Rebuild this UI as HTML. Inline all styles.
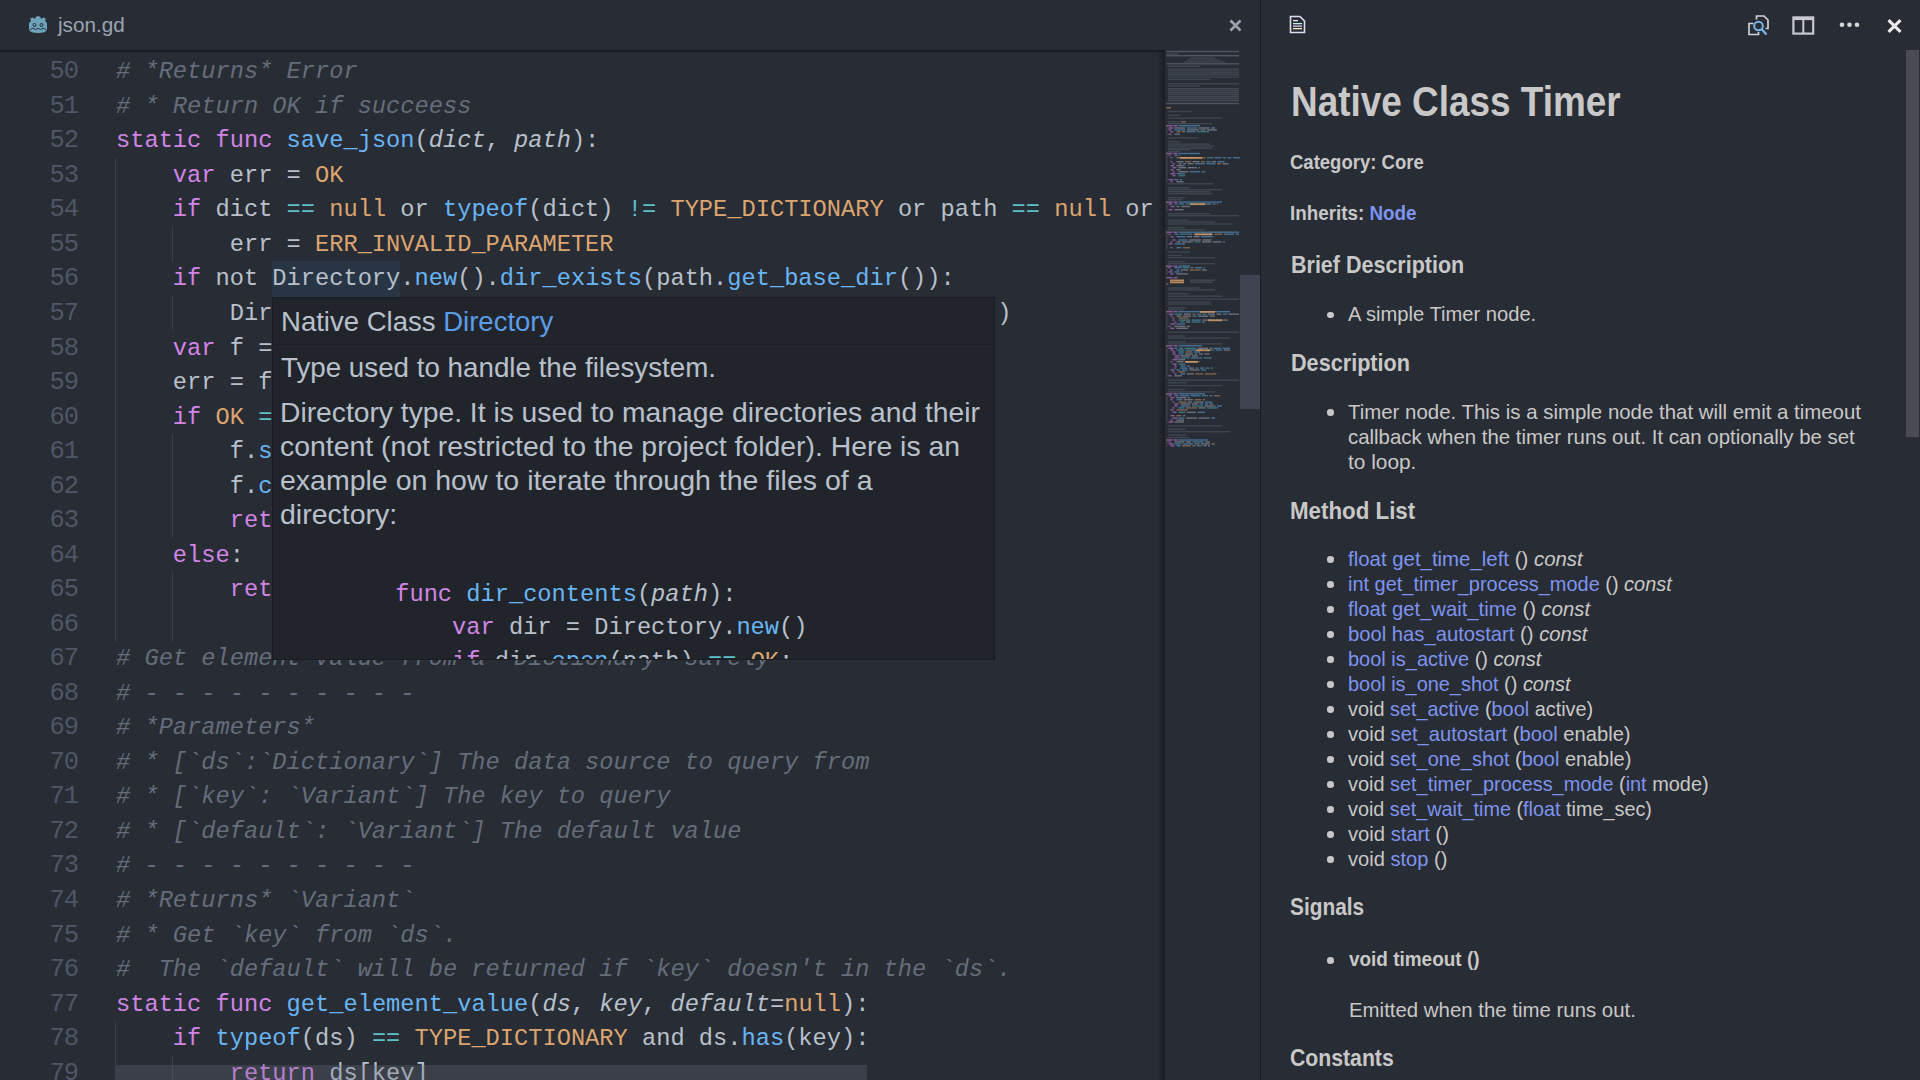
<!DOCTYPE html>
<html><head><meta charset="utf-8">
<style>
*{margin:0;padding:0;box-sizing:border-box}
html,body{width:1920px;height:1080px;overflow:hidden;background:#282c34}
body{position:relative;font-family:"Liberation Sans",sans-serif}
.abs{position:absolute}
#left{position:absolute;left:0;top:0;width:1260px;height:1080px;background:#282c34;overflow:hidden}
#tabbar{position:absolute;left:0;top:0;width:1260px;height:50px;background:#282c34}
#tabshadow{position:absolute;left:0;top:50px;width:1165px;height:3px;background:linear-gradient(#16181d,#1e2127 50%,#262a31)}
#code{position:absolute;left:0;top:55.3px;width:1166px;font-family:"Liberation Mono",monospace;font-size:23.7px;line-height:34.53px;white-space:pre;color:#b9c0cb}
.ln{position:absolute;left:0;width:78px;text-align:right;color:#4f5666;font-size:25.5px;letter-spacing:-1.08px}
.cl{position:absolute;left:116px}
.k{color:#d085e5}.f{color:#68b5f5}.c{color:#dca570}.o{color:#5cbfca}.cm{color:#656c7a;font-style:italic}.i{font-style:italic}
.guide{position:absolute;width:1px;background:#3b4048}
#minimap{position:absolute;left:1165px;top:50px;width:75px;height:1030px;background:#282c34}
#mmshadow{position:absolute;left:1157px;top:50px;width:8px;height:1030px;background:linear-gradient(to right,rgba(10,12,16,0),rgba(10,12,16,0.45))}
#vscroll{position:absolute;left:1240px;top:275px;width:20px;height:134px;background:#3e4451}
#divider{position:absolute;left:1260px;top:0;width:1px;height:1080px;background:#181b21}
#hscroll{position:absolute;left:116px;top:1065.3px;width:751px;height:15px;background:rgba(107,114,128,0.28)}
.pl{white-space:pre;transform-origin:0 0}
.rl{white-space:pre;transform-origin:0 0;color:#c8c8c8}
.bl{width:6.6px;height:6.6px;border-radius:50%;background:#c8c8c8}
#right{position:absolute;left:1261px;top:0;width:659px;height:1080px;background:#282c34;overflow:hidden;color:#cccccc}
</style></head><body>
<div id="left">
  <div id="tabbar"></div>
  <div id="tabshadow"></div>
  <div class="abs" style="left:272px;top:260.6px;width:128px;height:36.4px;background:#283545"></div>
<div class="guide" style="left:115px;top:158.03px;height:34.63px"></div><div class="guide" style="left:115px;top:192.56px;height:34.63px"></div><div class="guide" style="left:115px;top:227.09px;height:34.63px"></div><div class="guide" style="left:172px;top:227.09px;height:34.63px"></div><div class="guide" style="left:115px;top:261.62px;height:34.63px"></div><div class="guide" style="left:115px;top:296.15px;height:34.63px"></div><div class="guide" style="left:172px;top:296.15px;height:34.63px"></div><div class="guide" style="left:115px;top:330.68px;height:34.63px"></div><div class="guide" style="left:115px;top:365.21px;height:34.63px"></div><div class="guide" style="left:115px;top:399.74px;height:34.63px"></div><div class="guide" style="left:115px;top:434.27px;height:34.63px"></div><div class="guide" style="left:172px;top:434.27px;height:34.63px"></div><div class="guide" style="left:115px;top:468.80px;height:34.63px"></div><div class="guide" style="left:172px;top:468.80px;height:34.63px"></div><div class="guide" style="left:115px;top:503.33px;height:34.63px"></div><div class="guide" style="left:172px;top:503.33px;height:34.63px"></div><div class="guide" style="left:115px;top:537.86px;height:34.63px"></div><div class="guide" style="left:115px;top:572.39px;height:34.63px"></div><div class="guide" style="left:172px;top:572.39px;height:34.63px"></div><div class="guide" style="left:115px;top:606.92px;height:34.63px"></div><div class="guide" style="left:172px;top:606.92px;height:34.63px"></div><div class="guide" style="left:115px;top:1021.28px;height:34.63px"></div><div class="guide" style="left:115px;top:1055.81px;height:34.63px"></div><div class="guide" style="left:172px;top:1055.81px;height:34.63px"></div>
  <div id="code"><div class="ln" style="top:0.00px">50</div><div class="cl" style="top:0.00px"><span class="cm"># *Returns* Error</span></div>
<div class="ln" style="top:34.53px">51</div><div class="cl" style="top:34.53px"><span class="cm"># * Return OK if succeess</span></div>
<div class="ln" style="top:69.06px">52</div><div class="cl" style="top:69.06px"><span class="k">static</span> <span class="k">func</span> <span class="f">save_json</span>(<span class="i">dict</span>, <span class="i">path</span>):</div>
<div class="ln" style="top:103.59px">53</div><div class="cl" style="top:103.59px">    <span class="k">var</span> err = <span class="c">OK</span></div>
<div class="ln" style="top:138.12px">54</div><div class="cl" style="top:138.12px">    <span class="k">if</span> dict <span class="o">==</span> <span class="c">null</span> or <span class="f">typeof</span>(dict) <span class="o">!=</span> <span class="c">TYPE_DICTIONARY</span> or path <span class="o">==</span> <span class="c">null</span> or</div>
<div class="ln" style="top:172.65px">55</div><div class="cl" style="top:172.65px">        err = <span class="c">ERR_INVALID_PARAMETER</span></div>
<div class="ln" style="top:207.18px">56</div><div class="cl" style="top:207.18px">    <span class="k">if</span> not Directory.<span class="f">new</span>().<span class="f">dir_exists</span>(path.<span class="f">get_base_dir</span>()):</div>
<div class="ln" style="top:241.71px">57</div><div class="cl" style="top:241.71px">        Directory.<span class="f">new</span>().<span class="f">make_dir_recursive</span>(path.<span class="f">get_base_dir</span>())</div>
<div class="ln" style="top:276.24px">58</div><div class="cl" style="top:276.24px">    <span class="k">var</span> f = File.<span class="f">new</span>()</div>
<div class="ln" style="top:310.77px">59</div><div class="cl" style="top:310.77px">    err = f.<span class="f">open</span>(path, File.WRITE)</div>
<div class="ln" style="top:345.30px">60</div><div class="cl" style="top:345.30px">    <span class="k">if</span> <span class="c">OK</span> <span class="o">==</span> err:</div>
<div class="ln" style="top:379.83px">61</div><div class="cl" style="top:379.83px">        f.<span class="f">store_string</span>(<span class="f">to_json</span>(dict))</div>
<div class="ln" style="top:414.36px">62</div><div class="cl" style="top:414.36px">        f.<span class="f">close</span>()</div>
<div class="ln" style="top:448.89px">63</div><div class="cl" style="top:448.89px">        <span class="k">return</span> err</div>
<div class="ln" style="top:483.42px">64</div><div class="cl" style="top:483.42px">    <span class="k">else</span>:</div>
<div class="ln" style="top:517.95px">65</div><div class="cl" style="top:517.95px">        <span class="k">return</span> err</div>
<div class="ln" style="top:552.48px">66</div><div class="cl" style="top:552.48px"></div>
<div class="ln" style="top:587.01px">67</div><div class="cl" style="top:587.01px"><span class="cm"># Get element value from a `Dictionary` safely</span></div>
<div class="ln" style="top:621.54px">68</div><div class="cl" style="top:621.54px"><span class="cm"># - - - - - - - - - -</span></div>
<div class="ln" style="top:656.07px">69</div><div class="cl" style="top:656.07px"><span class="cm"># *Parameters*</span></div>
<div class="ln" style="top:690.60px">70</div><div class="cl" style="top:690.60px"><span class="cm"># * [`ds`:`Dictionary`] The data source to query from</span></div>
<div class="ln" style="top:725.13px">71</div><div class="cl" style="top:725.13px"><span class="cm"># * [`key`: `Variant`] The key to query</span></div>
<div class="ln" style="top:759.66px">72</div><div class="cl" style="top:759.66px"><span class="cm"># * [`default`: `Variant`] The default value</span></div>
<div class="ln" style="top:794.19px">73</div><div class="cl" style="top:794.19px"><span class="cm"># - - - - - - - - - -</span></div>
<div class="ln" style="top:828.72px">74</div><div class="cl" style="top:828.72px"><span class="cm"># *Returns* `Variant`</span></div>
<div class="ln" style="top:863.25px">75</div><div class="cl" style="top:863.25px"><span class="cm"># * Get `key` from `ds`.</span></div>
<div class="ln" style="top:897.78px">76</div><div class="cl" style="top:897.78px"><span class="cm">#  The `default` will be returned if `key` doesn't in the `ds`.</span></div>
<div class="ln" style="top:932.31px">77</div><div class="cl" style="top:932.31px"><span class="k">static</span> <span class="k">func</span> <span class="f">get_element_value</span>(<span class="i">ds</span>, <span class="i">key</span>, <span class="i">default</span>=<span class="c">null</span>):</div>
<div class="ln" style="top:966.84px">78</div><div class="cl" style="top:966.84px">    <span class="k">if</span> <span class="f">typeof</span>(ds) <span class="o">==</span> <span class="c">TYPE_DICTIONARY</span> and ds.<span class="f">has</span>(key):</div>
<div class="ln" style="top:1001.37px">79</div><div class="cl" style="top:1001.37px">        <span class="k">return</span> ds[key]</div>
</div>
  <div id="popup" class="abs" style="left:271.5px;top:296.5px;width:723.3px;height:363.5px;background:#21252b;border:1px solid #1a1c21;overflow:hidden;color:#b9c0cb">
 <div class="abs" style="left:0;top:0;width:722px;height:47px;border-bottom:1px solid #1b1e23"></div>
 <div class="abs pl" id="p0" style="left:8.0px;top:10.2px;font-size:27.3px;line-height:27.3px;transform:scaleX(1.0085)">Native Class <span style="color:#5c9ce6">Directory</span></div>
 <div class="abs pl" id="p1" style="left:8.5px;top:56.6px;font-size:27.8px;line-height:27.8px;transform:scaleX(0.9983)">Type used to handle the filesystem.</div>
 <div class="abs pl" id="p2" style="left:7.6px;top:101.6px;font-size:27.8px;line-height:27.8px;transform:scaleX(1.0157)">Directory type. It is used to manage directories and their</div>
 <div class="abs pl" id="p3" style="left:7.6px;top:135.5px;font-size:27.8px;line-height:27.8px;transform:scaleX(1.0213)">content (not restricted to the project folder). Here is an</div>
 <div class="abs pl" id="p4" style="left:7.6px;top:169.3px;font-size:27.8px;line-height:27.8px;transform:scaleX(1.0252)">example on how to iterate through the files of a</div>
 <div class="abs pl" id="p5" style="left:7.6px;top:203.1px;font-size:27.8px;line-height:27.8px;transform:scaleX(1.0253)">directory:</div>
 <div class="abs" style="left:9px;top:280px;font-family:'Liberation Mono',monospace;font-size:23.7px;line-height:33.8px;white-space:pre">        <span class="k">func</span> <span class="f">dir_contents</span>(<span class="i">path</span>):
            <span class="k">var</span> dir = Directory.<span class="f">new</span>()
            <span class="k">if</span> dir.<span class="f">open</span>(path) <span class="o">==</span> <span class="c">OK</span>:</div>
</div>

  <svg class="abs" style="left:28px;top:15px" width="20" height="19" viewBox="0 0 20 19">
<path d="M3 6 L2.2 3.5 L5 2.6 L6.5 4 Q8 1 10 1 Q12 1 13.5 4 L15 2.6 L17.8 3.5 L17 6 L19 8 L19 14 Q19 18 10 18 Q1 18 1 14 L1 8 Z" fill="#6fa3bb"/>
<circle cx="6.5" cy="10" r="2" fill="#2a3a46"/><circle cx="13.5" cy="10" r="2" fill="#2a3a46"/>
<circle cx="6.5" cy="10" r="0.9" fill="#6fa3bb"/><circle cx="13.5" cy="10" r="0.9" fill="#6fa3bb"/>
<path d="M2 14.5 L5 13.3 L7.5 14.5 L10 13.3 L12.5 14.5 L15 13.3 L18 14.5" stroke="#2a3a46" stroke-width="1" fill="none"/>
</svg>
<div class="abs" style="left:58px;top:10px;font-size:20.7px;line-height:30px;color:#9da5b4">json.gd</div>
<svg class="abs" style="left:1229px;top:19px" width="13" height="13" viewBox="0 0 13 13"><path d="M1.5 1.5 L11.5 11.5 M11.5 1.5 L1.5 11.5" stroke="#9ba2b0" stroke-width="2.6"/></svg>

  <div id="mmshadow"></div>
  <div id="minimap"><svg class="abs" style="left:0;top:0" width="75" height="410"><rect x="1.5" y="0.8" width="72.5" height="1.4" fill="#5c6370" opacity="0.75"/><rect x="1.5" y="3.2" width="11.5" height="1.4" fill="#5c6370" opacity="0.55"/><rect x="1.5" y="5.0" width="72.5" height="1.4" fill="#5c6370" opacity="0.75"/><rect x="25.0" y="7.4" width="25.0" height="1.4" fill="#5c6370" opacity="0.45"/><rect x="22.0" y="9.3" width="33.0" height="1.4" fill="#5c6370" opacity="0.45"/><rect x="19.0" y="11.2" width="41.0" height="1.4" fill="#5c6370" opacity="0.45"/><rect x="1.5" y="13.1" width="72.5" height="1.4" fill="#5c6370" opacity="0.75"/><rect x="3.0" y="15.5" width="32.0" height="1.4" fill="#5c6370" opacity="0.45"/><rect x="3.0" y="18.3" width="71.0" height="1.4" fill="#5c6370" opacity="0.45"/><rect x="3.0" y="20.2" width="71.0" height="1.4" fill="#5c6370" opacity="0.45"/><rect x="3.0" y="22.1" width="71.0" height="1.4" fill="#5c6370" opacity="0.45"/><rect x="3.0" y="24.0" width="71.0" height="1.4" fill="#5c6370" opacity="0.45"/><rect x="3.0" y="26.3" width="71.0" height="1.4" fill="#5c6370" opacity="0.45"/><rect x="3.0" y="28.7" width="42.0" height="1.4" fill="#5c6370" opacity="0.45"/><rect x="3.0" y="33.0" width="71.0" height="1.4" fill="#5c6370" opacity="0.45"/><rect x="3.0" y="35.3" width="32.0" height="1.4" fill="#5c6370" opacity="0.45"/><rect x="3.0" y="38.0" width="71.0" height="1.4" fill="#5c6370" opacity="0.55"/><rect x="3.0" y="40.0" width="71.0" height="1.4" fill="#5c6370" opacity="0.55"/><rect x="3.0" y="42.0" width="71.0" height="1.4" fill="#5c6370" opacity="0.55"/><rect x="3.0" y="44.0" width="71.0" height="1.4" fill="#5c6370" opacity="0.55"/><rect x="3.0" y="46.0" width="71.0" height="1.4" fill="#5c6370" opacity="0.55"/><rect x="3.0" y="48.0" width="71.0" height="1.4" fill="#5c6370" opacity="0.55"/><rect x="3.0" y="50.0" width="71.0" height="1.4" fill="#5c6370" opacity="0.55"/><rect x="1.5" y="52.8" width="72.5" height="1.4" fill="#5c6370" opacity="0.75"/><rect x="1.5" y="57.0" width="4.5" height="1.4" fill="#d19a66" opacity="0.60"/><rect x="3.0" y="60.8" width="24.0" height="1.4" fill="#5c6370" opacity="0.45"/><rect x="3.0" y="64.6" width="12.0" height="1.4" fill="#5c6370" opacity="0.45"/><rect x="3.0" y="67.4" width="54.0" height="1.4" fill="#5c6370" opacity="0.45"/><rect x="3.0" y="71.2" width="12.0" height="1.4" fill="#5c6370" opacity="0.45"/><rect x="16.0" y="71.2" width="5.0" height="1.4" fill="#d19a66" opacity="0.50"/><rect x="3.0" y="73.0" width="44.0" height="1.4" fill="#5c6370" opacity="0.45"/><rect x="1.5" y="75.0" width="6.0" height="1.4" fill="#c678dd" opacity="0.60"/><rect x="8.5" y="75.0" width="4.0" height="1.4" fill="#c678dd" opacity="0.60"/><rect x="13.5" y="75.0" width="21.5" height="1.4" fill="#61afef" opacity="0.50"/><rect x="3.5" y="77.3" width="5.0" height="1.4" fill="#c678dd" opacity="0.60"/><rect x="9.5" y="77.3" width="11.0" height="1.4" fill="#abb2bf" opacity="0.50"/><rect x="22.0" y="77.3" width="10.0" height="1.4" fill="#61afef" opacity="0.50"/><rect x="33.5" y="77.3" width="11.0" height="1.4" fill="#abb2bf" opacity="0.50"/><rect x="46.0" y="77.3" width="4.0" height="1.4" fill="#61afef" opacity="0.50"/><rect x="3.5" y="79.2" width="3.0" height="1.4" fill="#c678dd" opacity="0.60"/><rect x="9.5" y="79.2" width="11.0" height="1.4" fill="#61afef" opacity="0.50"/><rect x="22.0" y="79.2" width="12.0" height="1.4" fill="#abb2bf" opacity="0.50"/><rect x="35.5" y="79.2" width="5.0" height="1.4" fill="#abb2bf" opacity="0.50"/><rect x="42.0" y="79.2" width="10.0" height="1.4" fill="#abb2bf" opacity="0.50"/><rect x="5.5" y="81.0" width="3.0" height="1.4" fill="#c678dd" opacity="0.60"/><rect x="11.5" y="81.0" width="4.0" height="1.4" fill="#d19a66" opacity="0.50"/><rect x="17.0" y="81.0" width="3.0" height="1.4" fill="#d19a66" opacity="0.50"/><rect x="21.5" y="81.0" width="9.0" height="1.4" fill="#61afef" opacity="0.50"/><rect x="32.0" y="81.0" width="12.0" height="1.4" fill="#56b6c2" opacity="0.50"/><rect x="3.5" y="83.5" width="3.0" height="1.4" fill="#c678dd" opacity="0.60"/><rect x="9.5" y="83.5" width="5.5" height="1.4" fill="#abb2bf" opacity="0.50"/><rect x="3.0" y="87.2" width="30.0" height="1.4" fill="#5c6370" opacity="0.45"/><rect x="3.0" y="91.0" width="12.0" height="1.4" fill="#5c6370" opacity="0.45"/><rect x="3.0" y="93.4" width="42.0" height="1.4" fill="#5c6370" opacity="0.45"/><rect x="3.0" y="95.3" width="47.0" height="1.4" fill="#5c6370" opacity="0.45"/><rect x="3.0" y="97.5" width="44.0" height="1.4" fill="#5c6370" opacity="0.45"/><rect x="3.0" y="99.0" width="22.0" height="1.4" fill="#5c6370" opacity="0.45"/><rect x="3.0" y="101.0" width="12.0" height="1.4" fill="#5c6370" opacity="0.45"/><rect x="1.5" y="102.8" width="6.0" height="1.4" fill="#c678dd" opacity="0.60"/><rect x="8.5" y="102.8" width="4.0" height="1.4" fill="#c678dd" opacity="0.60"/><rect x="13.5" y="102.8" width="21.5" height="1.4" fill="#61afef" opacity="0.50"/><rect x="3.5" y="104.7" width="2.0" height="1.4" fill="#c678dd" opacity="0.60"/><rect x="9.5" y="104.7" width="3.0" height="1.4" fill="#abb2bf" opacity="0.50"/><rect x="14.0" y="104.7" width="1.0" height="1.4" fill="#61afef" opacity="0.50"/><rect x="5.5" y="107.0" width="2.0" height="1.4" fill="#c678dd" opacity="0.60"/><rect x="11.5" y="107.0" width="10.0" height="1.4" fill="#abb2bf" opacity="0.50"/><rect x="23.0" y="107.0" width="10.0" height="1.4" fill="#d19a66" opacity="0.50"/><rect x="34.5" y="107.0" width="6.0" height="1.4" fill="#d19a66" opacity="0.50"/><rect x="42.0" y="107.0" width="6.0" height="1.4" fill="#56b6c2" opacity="0.50"/><rect x="49.5" y="107.0" width="7.0" height="1.4" fill="#61afef" opacity="0.50"/><rect x="58.0" y="107.0" width="3.0" height="1.4" fill="#56b6c2" opacity="0.50"/><rect x="62.5" y="107.0" width="4.0" height="1.4" fill="#61afef" opacity="0.50"/><rect x="68.0" y="107.0" width="7.0" height="1.4" fill="#61afef" opacity="0.50"/><rect x="5.5" y="111.0" width="2.0" height="1.4" fill="#c678dd" opacity="0.60"/><rect x="11.5" y="111.0" width="7.0" height="1.4" fill="#abb2bf" opacity="0.50"/><rect x="20.0" y="111.0" width="6.0" height="1.4" fill="#d19a66" opacity="0.50"/><rect x="27.5" y="111.0" width="7.0" height="1.4" fill="#abb2bf" opacity="0.50"/><rect x="36.0" y="111.0" width="4.0" height="1.4" fill="#d19a66" opacity="0.50"/><rect x="41.5" y="111.0" width="4.0" height="1.4" fill="#61afef" opacity="0.50"/><rect x="47.0" y="111.0" width="4.0" height="1.4" fill="#abb2bf" opacity="0.50"/><rect x="52.5" y="111.0" width="7.0" height="1.4" fill="#61afef" opacity="0.50"/><rect x="7.5" y="113.0" width="2.0" height="1.4" fill="#c678dd" opacity="0.60"/><rect x="13.5" y="113.0" width="3.0" height="1.4" fill="#abb2bf" opacity="0.50"/><rect x="18.0" y="113.0" width="3.0" height="1.4" fill="#61afef" opacity="0.50"/><rect x="22.5" y="113.0" width="6.0" height="1.4" fill="#abb2bf" opacity="0.50"/><rect x="30.0" y="113.0" width="10.0" height="1.4" fill="#61afef" opacity="0.50"/><rect x="41.5" y="113.0" width="9.0" height="1.4" fill="#61afef" opacity="0.50"/><rect x="52.0" y="113.0" width="4.0" height="1.4" fill="#d19a66" opacity="0.50"/><rect x="57.5" y="113.0" width="6.0" height="1.4" fill="#abb2bf" opacity="0.50"/><rect x="5.5" y="115.0" width="4.0" height="1.4" fill="#c678dd" opacity="0.60"/><rect x="11.5" y="115.0" width="8.0" height="1.4" fill="#abb2bf" opacity="0.50"/><rect x="7.5" y="117.0" width="4.0" height="1.4" fill="#c678dd" opacity="0.60"/><rect x="13.5" y="117.0" width="8.0" height="1.4" fill="#abb2bf" opacity="0.50"/><rect x="23.0" y="117.0" width="9.0" height="1.4" fill="#abb2bf" opacity="0.50"/><rect x="33.5" y="117.0" width="1.5" height="1.4" fill="#61afef" opacity="0.50"/><rect x="5.5" y="119.0" width="3.0" height="1.4" fill="#c678dd" opacity="0.60"/><rect x="11.5" y="119.0" width="4.0" height="1.4" fill="#abb2bf" opacity="0.50"/><rect x="7.5" y="121.0" width="2.0" height="1.4" fill="#c678dd" opacity="0.60"/><rect x="13.5" y="121.0" width="10.0" height="1.4" fill="#abb2bf" opacity="0.50"/><rect x="25.0" y="121.0" width="10.0" height="1.4" fill="#61afef" opacity="0.50"/><rect x="36.5" y="121.0" width="3.5" height="1.4" fill="#61afef" opacity="0.50"/><rect x="5.5" y="123.0" width="5.0" height="1.4" fill="#c678dd" opacity="0.60"/><rect x="11.5" y="123.0" width="8.5" height="1.4" fill="#61afef" opacity="0.50"/><rect x="7.5" y="125.0" width="3.0" height="1.4" fill="#c678dd" opacity="0.60"/><rect x="13.5" y="125.0" width="6.5" height="1.4" fill="#56b6c2" opacity="0.50"/><rect x="3.5" y="129.0" width="5.0" height="1.4" fill="#c678dd" opacity="0.60"/><rect x="9.5" y="129.0" width="4.0" height="1.4" fill="#61afef" opacity="0.50"/><rect x="15.0" y="129.0" width="2.0" height="1.4" fill="#61afef" opacity="0.50"/><rect x="5.5" y="131.0" width="2.0" height="1.4" fill="#c678dd" opacity="0.60"/><rect x="11.5" y="131.0" width="7.0" height="1.4" fill="#abb2bf" opacity="0.50"/><rect x="3.0" y="133.0" width="45.0" height="1.4" fill="#5c6370" opacity="0.45"/><rect x="3.0" y="137.0" width="22.0" height="1.4" fill="#5c6370" opacity="0.45"/><rect x="3.0" y="139.0" width="54.0" height="1.4" fill="#5c6370" opacity="0.45"/><rect x="3.0" y="141.0" width="42.0" height="1.4" fill="#5c6370" opacity="0.45"/><rect x="3.0" y="143.0" width="44.0" height="1.4" fill="#5c6370" opacity="0.45"/><rect x="3.0" y="147.0" width="17.0" height="1.4" fill="#5c6370" opacity="0.45"/><rect x="3.0" y="149.0" width="14.0" height="1.4" fill="#5c6370" opacity="0.45"/><rect x="1.5" y="151.4" width="6.0" height="1.4" fill="#c678dd" opacity="0.60"/><rect x="8.5" y="151.4" width="4.0" height="1.4" fill="#c678dd" opacity="0.60"/><rect x="13.5" y="151.4" width="43.5" height="1.4" fill="#61afef" opacity="0.50"/><rect x="3.5" y="153.3" width="4.0" height="1.4" fill="#c678dd" opacity="0.60"/><rect x="9.5" y="153.3" width="3.0" height="1.4" fill="#61afef" opacity="0.50"/><rect x="14.0" y="153.3" width="5.0" height="1.4" fill="#61afef" opacity="0.50"/><rect x="20.5" y="153.3" width="12.0" height="1.4" fill="#56b6c2" opacity="0.50"/><rect x="34.0" y="153.3" width="12.0" height="1.4" fill="#abb2bf" opacity="0.50"/><rect x="47.5" y="153.3" width="3.0" height="1.4" fill="#61afef" opacity="0.50"/><rect x="52.0" y="153.3" width="1.0" height="1.4" fill="#61afef" opacity="0.50"/><rect x="5.5" y="155.8" width="4.0" height="1.4" fill="#c678dd" opacity="0.60"/><rect x="11.5" y="155.8" width="3.0" height="1.4" fill="#abb2bf" opacity="0.50"/><rect x="16.0" y="155.8" width="9.0" height="1.4" fill="#abb2bf" opacity="0.50"/><rect x="3.5" y="159.0" width="4.0" height="1.4" fill="#c678dd" opacity="0.60"/><rect x="9.5" y="159.0" width="9.0" height="1.4" fill="#abb2bf" opacity="0.50"/><rect x="3.0" y="163.0" width="42.0" height="1.4" fill="#5c6370" opacity="0.45"/><rect x="3.0" y="165.0" width="71.0" height="1.4" fill="#5c6370" opacity="0.45"/><rect x="3.0" y="169.4" width="20.0" height="1.4" fill="#5c6370" opacity="0.45"/><rect x="3.0" y="171.3" width="47.0" height="1.4" fill="#5c6370" opacity="0.45"/><rect x="3.0" y="173.3" width="64.0" height="1.4" fill="#5c6370" opacity="0.45"/><rect x="3.0" y="177.0" width="17.0" height="1.4" fill="#5c6370" opacity="0.45"/><rect x="3.0" y="179.0" width="37.0" height="1.4" fill="#5c6370" opacity="0.45"/><rect x="1.5" y="181.5" width="6.0" height="1.4" fill="#c678dd" opacity="0.60"/><rect x="8.5" y="181.5" width="4.0" height="1.4" fill="#c678dd" opacity="0.60"/><rect x="13.5" y="181.5" width="60.5" height="1.4" fill="#61afef" opacity="0.50"/><rect x="3.5" y="183.5" width="2.0" height="1.4" fill="#c678dd" opacity="0.60"/><rect x="9.5" y="183.5" width="4.0" height="1.4" fill="#61afef" opacity="0.50"/><rect x="15.0" y="183.5" width="12.0" height="1.4" fill="#56b6c2" opacity="0.50"/><rect x="28.5" y="183.5" width="6.0" height="1.4" fill="#abb2bf" opacity="0.50"/><rect x="36.0" y="183.5" width="12.0" height="1.4" fill="#abb2bf" opacity="0.50"/><rect x="49.5" y="183.5" width="8.0" height="1.4" fill="#d19a66" opacity="0.50"/><rect x="59.0" y="183.5" width="10.0" height="1.4" fill="#61afef" opacity="0.50"/><rect x="70.5" y="183.5" width="3.5" height="1.4" fill="#61afef" opacity="0.50"/><rect x="5.5" y="186.0" width="3.0" height="1.4" fill="#c678dd" opacity="0.60"/><rect x="11.5" y="186.0" width="9.0" height="1.4" fill="#61afef" opacity="0.50"/><rect x="22.0" y="186.0" width="5.0" height="1.4" fill="#abb2bf" opacity="0.50"/><rect x="28.5" y="186.0" width="6.0" height="1.4" fill="#abb2bf" opacity="0.50"/><rect x="36.0" y="186.0" width="12.0" height="1.4" fill="#61afef" opacity="0.50"/><rect x="49.5" y="186.0" width="0.5" height="1.4" fill="#61afef" opacity="0.50"/><rect x="7.5" y="189.3" width="3.0" height="1.4" fill="#c678dd" opacity="0.60"/><rect x="13.5" y="189.3" width="9.0" height="1.4" fill="#61afef" opacity="0.50"/><rect x="24.0" y="189.3" width="12.0" height="1.4" fill="#abb2bf" opacity="0.50"/><rect x="37.5" y="189.3" width="9.0" height="1.4" fill="#abb2bf" opacity="0.50"/><rect x="5.5" y="191.2" width="2.0" height="1.4" fill="#c678dd" opacity="0.60"/><rect x="11.5" y="191.2" width="4.0" height="1.4" fill="#abb2bf" opacity="0.50"/><rect x="17.0" y="191.2" width="11.0" height="1.4" fill="#abb2bf" opacity="0.50"/><rect x="29.5" y="191.2" width="6.0" height="1.4" fill="#56b6c2" opacity="0.50"/><rect x="37.0" y="191.2" width="9.0" height="1.4" fill="#abb2bf" opacity="0.50"/><rect x="47.5" y="191.2" width="9.0" height="1.4" fill="#abb2bf" opacity="0.50"/><rect x="58.0" y="191.2" width="2.0" height="1.4" fill="#61afef" opacity="0.50"/><rect x="3.5" y="193.2" width="4.0" height="1.4" fill="#c678dd" opacity="0.60"/><rect x="9.5" y="193.2" width="10.5" height="1.4" fill="#61afef" opacity="0.50"/><rect x="5.5" y="197.0" width="2.0" height="1.4" fill="#c678dd" opacity="0.60"/><rect x="11.5" y="197.0" width="5.0" height="1.4" fill="#61afef" opacity="0.50"/><rect x="18.0" y="197.0" width="7.0" height="1.4" fill="#d19a66" opacity="0.50"/><rect x="3.0" y="201.3" width="22.0" height="1.4" fill="#5c6370" opacity="0.45"/><rect x="3.0" y="204.7" width="14.0" height="1.4" fill="#5c6370" opacity="0.45"/><rect x="3.0" y="207.0" width="47.0" height="1.4" fill="#5c6370" opacity="0.45"/><rect x="3.0" y="211.0" width="17.0" height="1.4" fill="#5c6370" opacity="0.45"/><rect x="3.0" y="213.0" width="47.0" height="1.4" fill="#5c6370" opacity="0.45"/><rect x="1.5" y="215.4" width="6.0" height="1.4" fill="#c678dd" opacity="0.60"/><rect x="8.5" y="215.4" width="4.0" height="1.4" fill="#c678dd" opacity="0.60"/><rect x="13.5" y="215.4" width="11.5" height="1.4" fill="#61afef" opacity="0.50"/><rect x="3.5" y="217.0" width="2.0" height="1.4" fill="#c678dd" opacity="0.60"/><rect x="9.5" y="217.0" width="7.0" height="1.4" fill="#61afef" opacity="0.50"/><rect x="18.0" y="217.0" width="6.0" height="1.4" fill="#56b6c2" opacity="0.50"/><rect x="25.5" y="217.0" width="3.0" height="1.4" fill="#abb2bf" opacity="0.50"/><rect x="30.0" y="217.0" width="7.0" height="1.4" fill="#61afef" opacity="0.50"/><rect x="38.5" y="217.0" width="1.5" height="1.4" fill="#61afef" opacity="0.50"/><rect x="5.5" y="219.3" width="2.0" height="1.4" fill="#c678dd" opacity="0.60"/><rect x="11.5" y="219.3" width="3.0" height="1.4" fill="#61afef" opacity="0.50"/><rect x="16.0" y="219.3" width="7.0" height="1.4" fill="#abb2bf" opacity="0.50"/><rect x="24.5" y="219.3" width="11.0" height="1.4" fill="#d19a66" opacity="0.50"/><rect x="37.0" y="219.3" width="5.0" height="1.4" fill="#abb2bf" opacity="0.50"/><rect x="3.5" y="221.2" width="4.0" height="1.4" fill="#c678dd" opacity="0.60"/><rect x="9.5" y="221.2" width="5.0" height="1.4" fill="#61afef" opacity="0.50"/><rect x="16.0" y="221.2" width="1.0" height="1.4" fill="#56b6c2" opacity="0.50"/><rect x="5.5" y="223.2" width="3.0" height="1.4" fill="#c678dd" opacity="0.60"/><rect x="11.5" y="223.2" width="11.5" height="1.4" fill="#abb2bf" opacity="0.50"/><rect x="1.5" y="227.0" width="6.0" height="1.4" fill="#c678dd" opacity="0.60"/><rect x="8.5" y="227.0" width="4.0" height="1.4" fill="#c678dd" opacity="0.60"/><rect x="1.5" y="233.4" width="2.0" height="1.4" fill="#c678dd" opacity="0.60"/><rect x="3.0" y="237.3" width="32.0" height="1.4" fill="#5c6370" opacity="0.45"/><rect x="3.0" y="239.2" width="47.0" height="1.4" fill="#5c6370" opacity="0.45"/><rect x="3.0" y="243.0" width="20.0" height="1.4" fill="#5c6370" opacity="0.45"/><rect x="3.0" y="245.5" width="54.0" height="1.4" fill="#5c6370" opacity="0.45"/><rect x="3.0" y="248.5" width="71.0" height="1.4" fill="#5c6370" opacity="0.45"/><rect x="3.0" y="251.4" width="42.0" height="1.4" fill="#5c6370" opacity="0.45"/><rect x="3.0" y="253.3" width="44.0" height="1.4" fill="#5c6370" opacity="0.45"/><rect x="3.0" y="257.2" width="18.0" height="1.4" fill="#5c6370" opacity="0.45"/><rect x="3.0" y="259.2" width="16.0" height="1.4" fill="#5c6370" opacity="0.45"/><rect x="1.5" y="261.0" width="6.0" height="1.4" fill="#c678dd" opacity="0.60"/><rect x="8.5" y="261.0" width="4.0" height="1.4" fill="#c678dd" opacity="0.60"/><rect x="13.5" y="261.0" width="51.5" height="1.4" fill="#61afef" opacity="0.50"/><rect x="3.5" y="263.5" width="5.0" height="1.4" fill="#c678dd" opacity="0.60"/><rect x="9.5" y="263.5" width="8.0" height="1.4" fill="#56b6c2" opacity="0.50"/><rect x="19.0" y="263.5" width="7.0" height="1.4" fill="#abb2bf" opacity="0.50"/><rect x="27.5" y="263.5" width="3.0" height="1.4" fill="#d19a66" opacity="0.50"/><rect x="32.0" y="263.5" width="4.0" height="1.4" fill="#61afef" opacity="0.50"/><rect x="37.5" y="263.5" width="4.0" height="1.4" fill="#56b6c2" opacity="0.50"/><rect x="43.0" y="263.5" width="7.0" height="1.4" fill="#abb2bf" opacity="0.50"/><rect x="51.5" y="263.5" width="5.0" height="1.4" fill="#abb2bf" opacity="0.50"/><rect x="58.0" y="263.5" width="4.0" height="1.4" fill="#61afef" opacity="0.50"/><rect x="63.5" y="263.5" width="10.5" height="1.4" fill="#abb2bf" opacity="0.50"/><rect x="5.5" y="265.5" width="2.0" height="1.4" fill="#c678dd" opacity="0.60"/><rect x="11.5" y="265.5" width="5.0" height="1.4" fill="#abb2bf" opacity="0.50"/><rect x="18.0" y="265.5" width="8.0" height="1.4" fill="#abb2bf" opacity="0.50"/><rect x="27.5" y="265.5" width="4.0" height="1.4" fill="#56b6c2" opacity="0.50"/><rect x="33.0" y="265.5" width="10.0" height="1.4" fill="#abb2bf" opacity="0.50"/><rect x="44.5" y="265.5" width="5.5" height="1.4" fill="#abb2bf" opacity="0.50"/><rect x="7.5" y="267.4" width="2.0" height="1.4" fill="#c678dd" opacity="0.60"/><rect x="13.5" y="267.4" width="10.0" height="1.4" fill="#d19a66" opacity="0.50"/><rect x="7.5" y="269.4" width="2.0" height="1.4" fill="#c678dd" opacity="0.60"/><rect x="13.5" y="269.4" width="12.0" height="1.4" fill="#56b6c2" opacity="0.50"/><rect x="27.0" y="269.4" width="9.0" height="1.4" fill="#61afef" opacity="0.50"/><rect x="37.5" y="269.4" width="12.0" height="1.4" fill="#abb2bf" opacity="0.50"/><rect x="51.0" y="269.4" width="12.0" height="1.4" fill="#abb2bf" opacity="0.50"/><rect x="9.5" y="271.3" width="2.0" height="1.4" fill="#c678dd" opacity="0.60"/><rect x="15.5" y="271.3" width="4.0" height="1.4" fill="#56b6c2" opacity="0.50"/><rect x="21.0" y="271.3" width="4.0" height="1.4" fill="#abb2bf" opacity="0.50"/><rect x="26.5" y="271.3" width="9.0" height="1.4" fill="#56b6c2" opacity="0.50"/><rect x="37.0" y="271.3" width="3.0" height="1.4" fill="#61afef" opacity="0.50"/><rect x="5.5" y="273.3" width="5.0" height="1.4" fill="#c678dd" opacity="0.60"/><rect x="11.5" y="273.3" width="8.5" height="1.4" fill="#61afef" opacity="0.50"/><rect x="3.5" y="275.7" width="2.0" height="1.4" fill="#c678dd" opacity="0.60"/><rect x="9.5" y="275.7" width="11.0" height="1.4" fill="#abb2bf" opacity="0.50"/><rect x="22.0" y="275.7" width="3.0" height="1.4" fill="#abb2bf" opacity="0.50"/><rect x="5.5" y="277.6" width="4.0" height="1.4" fill="#c678dd" opacity="0.60"/><rect x="11.5" y="277.6" width="11.5" height="1.4" fill="#abb2bf" opacity="0.50"/><rect x="3.0" y="281.5" width="71.0" height="1.4" fill="#5c6370" opacity="0.45"/><rect x="3.0" y="285.4" width="17.0" height="1.4" fill="#5c6370" opacity="0.45"/><rect x="3.0" y="287.4" width="62.0" height="1.4" fill="#5c6370" opacity="0.45"/><rect x="3.0" y="291.2" width="18.0" height="1.4" fill="#5c6370" opacity="0.45"/><rect x="3.0" y="293.2" width="54.0" height="1.4" fill="#5c6370" opacity="0.45"/><rect x="1.5" y="295.1" width="6.0" height="1.4" fill="#c678dd" opacity="0.60"/><rect x="8.5" y="295.1" width="4.0" height="1.4" fill="#c678dd" opacity="0.60"/><rect x="13.5" y="295.1" width="23.5" height="1.4" fill="#61afef" opacity="0.50"/><rect x="3.5" y="297.6" width="5.0" height="1.4" fill="#c678dd" opacity="0.60"/><rect x="9.5" y="297.6" width="3.0" height="1.4" fill="#61afef" opacity="0.50"/><rect x="14.0" y="297.6" width="4.0" height="1.4" fill="#61afef" opacity="0.50"/><rect x="19.5" y="297.6" width="12.0" height="1.4" fill="#56b6c2" opacity="0.50"/><rect x="33.0" y="297.6" width="10.0" height="1.4" fill="#abb2bf" opacity="0.50"/><rect x="44.5" y="297.6" width="3.0" height="1.4" fill="#abb2bf" opacity="0.50"/><rect x="49.0" y="297.6" width="7.0" height="1.4" fill="#61afef" opacity="0.50"/><rect x="57.5" y="297.6" width="7.5" height="1.4" fill="#61afef" opacity="0.50"/><rect x="5.5" y="299.4" width="3.0" height="1.4" fill="#c678dd" opacity="0.60"/><rect x="11.5" y="299.4" width="8.0" height="1.4" fill="#56b6c2" opacity="0.50"/><rect x="21.0" y="299.4" width="10.0" height="1.4" fill="#61afef" opacity="0.50"/><rect x="32.5" y="299.4" width="6.0" height="1.4" fill="#abb2bf" opacity="0.50"/><rect x="40.0" y="299.4" width="9.0" height="1.4" fill="#56b6c2" opacity="0.50"/><rect x="50.5" y="299.4" width="7.0" height="1.4" fill="#61afef" opacity="0.50"/><rect x="59.0" y="299.4" width="6.0" height="1.4" fill="#abb2bf" opacity="0.50"/><rect x="7.5" y="301.3" width="3.0" height="1.4" fill="#c678dd" opacity="0.60"/><rect x="13.5" y="301.3" width="6.0" height="1.4" fill="#61afef" opacity="0.50"/><rect x="21.0" y="301.3" width="6.0" height="1.4" fill="#d19a66" opacity="0.50"/><rect x="28.5" y="301.3" width="6.5" height="1.4" fill="#61afef" opacity="0.50"/><rect x="7.5" y="303.3" width="3.0" height="1.4" fill="#c678dd" opacity="0.60"/><rect x="13.5" y="303.3" width="5.0" height="1.4" fill="#61afef" opacity="0.50"/><rect x="20.0" y="303.3" width="8.0" height="1.4" fill="#abb2bf" opacity="0.50"/><rect x="29.5" y="303.3" width="3.0" height="1.4" fill="#56b6c2" opacity="0.50"/><rect x="34.0" y="303.3" width="4.0" height="1.4" fill="#abb2bf" opacity="0.50"/><rect x="39.5" y="303.3" width="5.0" height="1.4" fill="#abb2bf" opacity="0.50"/><rect x="9.5" y="305.2" width="5.0" height="1.4" fill="#c678dd" opacity="0.60"/><rect x="15.5" y="305.2" width="10.0" height="1.4" fill="#abb2bf" opacity="0.50"/><rect x="27.0" y="305.2" width="6.0" height="1.4" fill="#abb2bf" opacity="0.50"/><rect x="9.5" y="307.2" width="5.0" height="1.4" fill="#c678dd" opacity="0.60"/><rect x="15.5" y="307.2" width="9.0" height="1.4" fill="#56b6c2" opacity="0.50"/><rect x="26.0" y="307.2" width="11.0" height="1.4" fill="#61afef" opacity="0.50"/><rect x="38.5" y="307.2" width="8.0" height="1.4" fill="#56b6c2" opacity="0.50"/><rect x="7.5" y="309.0" width="5.0" height="1.4" fill="#c678dd" opacity="0.60"/><rect x="13.5" y="309.0" width="6.5" height="1.4" fill="#abb2bf" opacity="0.50"/><rect x="5.5" y="311.0" width="2.0" height="1.4" fill="#c678dd" opacity="0.60"/><rect x="11.5" y="311.0" width="7.0" height="1.4" fill="#abb2bf" opacity="0.50"/><rect x="20.0" y="311.0" width="12.0" height="1.4" fill="#abb2bf" opacity="0.50"/><rect x="33.5" y="311.0" width="1.5" height="1.4" fill="#d19a66" opacity="0.50"/><rect x="7.5" y="313.5" width="4.0" height="1.4" fill="#c678dd" opacity="0.60"/><rect x="13.5" y="313.5" width="6.5" height="1.4" fill="#56b6c2" opacity="0.50"/><rect x="9.5" y="315.4" width="2.0" height="1.4" fill="#c678dd" opacity="0.60"/><rect x="15.5" y="315.4" width="5.0" height="1.4" fill="#61afef" opacity="0.50"/><rect x="22.0" y="315.4" width="3.0" height="1.4" fill="#61afef" opacity="0.50"/><rect x="9.5" y="317.4" width="2.0" height="1.4" fill="#c678dd" opacity="0.60"/><rect x="15.5" y="317.4" width="7.0" height="1.4" fill="#61afef" opacity="0.50"/><rect x="24.0" y="317.4" width="5.0" height="1.4" fill="#abb2bf" opacity="0.50"/><rect x="30.5" y="317.4" width="3.0" height="1.4" fill="#56b6c2" opacity="0.50"/><rect x="35.0" y="317.4" width="4.0" height="1.4" fill="#61afef" opacity="0.50"/><rect x="40.5" y="317.4" width="4.0" height="1.4" fill="#56b6c2" opacity="0.50"/><rect x="46.0" y="317.4" width="2.0" height="1.4" fill="#56b6c2" opacity="0.50"/><rect x="5.5" y="319.3" width="4.0" height="1.4" fill="#c678dd" opacity="0.60"/><rect x="11.5" y="319.3" width="4.0" height="1.4" fill="#56b6c2" opacity="0.50"/><rect x="17.0" y="319.3" width="6.0" height="1.4" fill="#61afef" opacity="0.50"/><rect x="24.5" y="319.3" width="10.0" height="1.4" fill="#abb2bf" opacity="0.50"/><rect x="36.0" y="319.3" width="5.0" height="1.4" fill="#56b6c2" opacity="0.50"/><rect x="7.5" y="321.2" width="2.0" height="1.4" fill="#c678dd" opacity="0.60"/><rect x="13.5" y="321.2" width="6.5" height="1.4" fill="#d19a66" opacity="0.50"/><rect x="9.5" y="323.2" width="2.0" height="1.4" fill="#c678dd" opacity="0.60"/><rect x="15.5" y="323.2" width="5.0" height="1.4" fill="#61afef" opacity="0.50"/><rect x="22.0" y="323.2" width="7.0" height="1.4" fill="#abb2bf" opacity="0.50"/><rect x="30.5" y="323.2" width="8.0" height="1.4" fill="#d19a66" opacity="0.50"/><rect x="40.0" y="323.2" width="11.0" height="1.4" fill="#d19a66" opacity="0.50"/><rect x="52.5" y="323.2" width="0.5" height="1.4" fill="#abb2bf" opacity="0.50"/><rect x="3.5" y="325.1" width="3.0" height="1.4" fill="#c678dd" opacity="0.60"/><rect x="9.5" y="325.1" width="7.5" height="1.4" fill="#abb2bf" opacity="0.50"/><rect x="3.0" y="329.5" width="71.0" height="1.4" fill="#5c6370" opacity="0.45"/><rect x="3.0" y="332.0" width="18.0" height="1.4" fill="#5c6370" opacity="0.45"/><rect x="3.0" y="334.9" width="54.0" height="1.4" fill="#5c6370" opacity="0.45"/><rect x="3.0" y="338.7" width="17.0" height="1.4" fill="#5c6370" opacity="0.45"/><rect x="3.0" y="341.2" width="47.0" height="1.4" fill="#5c6370" opacity="0.45"/><rect x="1.5" y="343.1" width="6.0" height="1.4" fill="#c678dd" opacity="0.60"/><rect x="8.5" y="343.1" width="4.0" height="1.4" fill="#c678dd" opacity="0.60"/><rect x="13.5" y="343.1" width="26.5" height="1.4" fill="#61afef" opacity="0.50"/><rect x="3.5" y="345.0" width="3.0" height="1.4" fill="#c678dd" opacity="0.60"/><rect x="9.5" y="345.0" width="4.0" height="1.4" fill="#61afef" opacity="0.50"/><rect x="15.0" y="345.0" width="9.0" height="1.4" fill="#61afef" opacity="0.50"/><rect x="25.5" y="345.0" width="10.0" height="1.4" fill="#61afef" opacity="0.50"/><rect x="37.0" y="345.0" width="6.0" height="1.4" fill="#56b6c2" opacity="0.50"/><rect x="44.5" y="345.0" width="3.0" height="1.4" fill="#61afef" opacity="0.50"/><rect x="49.0" y="345.0" width="6.0" height="1.4" fill="#d19a66" opacity="0.50"/><rect x="5.5" y="347.0" width="4.0" height="1.4" fill="#c678dd" opacity="0.60"/><rect x="11.5" y="347.0" width="10.0" height="1.4" fill="#abb2bf" opacity="0.50"/><rect x="23.0" y="347.0" width="2.0" height="1.4" fill="#abb2bf" opacity="0.50"/><rect x="5.5" y="349.0" width="2.0" height="1.4" fill="#c678dd" opacity="0.60"/><rect x="11.5" y="349.0" width="6.0" height="1.4" fill="#61afef" opacity="0.50"/><rect x="19.0" y="349.0" width="9.0" height="1.4" fill="#abb2bf" opacity="0.50"/><rect x="29.5" y="349.0" width="7.0" height="1.4" fill="#d19a66" opacity="0.50"/><rect x="38.0" y="349.0" width="2.0" height="1.4" fill="#abb2bf" opacity="0.50"/><rect x="7.5" y="351.4" width="2.0" height="1.4" fill="#c678dd" opacity="0.60"/><rect x="13.5" y="351.4" width="8.0" height="1.4" fill="#d19a66" opacity="0.50"/><rect x="23.0" y="351.4" width="4.0" height="1.4" fill="#abb2bf" opacity="0.50"/><rect x="28.5" y="351.4" width="10.0" height="1.4" fill="#abb2bf" opacity="0.50"/><rect x="40.0" y="351.4" width="7.0" height="1.4" fill="#61afef" opacity="0.50"/><rect x="9.5" y="353.3" width="4.0" height="1.4" fill="#c678dd" opacity="0.60"/><rect x="15.5" y="353.3" width="10.0" height="1.4" fill="#abb2bf" opacity="0.50"/><rect x="27.0" y="353.3" width="6.0" height="1.4" fill="#abb2bf" opacity="0.50"/><rect x="34.5" y="353.3" width="4.0" height="1.4" fill="#61afef" opacity="0.50"/><rect x="40.0" y="353.3" width="3.0" height="1.4" fill="#61afef" opacity="0.50"/><rect x="44.5" y="353.3" width="3.5" height="1.4" fill="#abb2bf" opacity="0.50"/><rect x="9.5" y="355.3" width="3.0" height="1.4" fill="#c678dd" opacity="0.60"/><rect x="15.5" y="355.3" width="10.0" height="1.4" fill="#61afef" opacity="0.50"/><rect x="27.0" y="355.3" width="11.0" height="1.4" fill="#56b6c2" opacity="0.50"/><rect x="39.5" y="355.3" width="11.0" height="1.4" fill="#abb2bf" opacity="0.50"/><rect x="52.0" y="355.3" width="5.0" height="1.4" fill="#61afef" opacity="0.50"/><rect x="7.5" y="357.2" width="2.0" height="1.4" fill="#c678dd" opacity="0.60"/><rect x="13.5" y="357.2" width="6.0" height="1.4" fill="#61afef" opacity="0.50"/><rect x="21.0" y="357.2" width="11.0" height="1.4" fill="#d19a66" opacity="0.50"/><rect x="33.5" y="357.2" width="7.0" height="1.4" fill="#abb2bf" opacity="0.50"/><rect x="42.0" y="357.2" width="11.0" height="1.4" fill="#56b6c2" opacity="0.50"/><rect x="5.5" y="359.2" width="3.0" height="1.4" fill="#c678dd" opacity="0.60"/><rect x="11.5" y="359.2" width="11.0" height="1.4" fill="#d19a66" opacity="0.50"/><rect x="7.5" y="361.6" width="4.0" height="1.4" fill="#c678dd" opacity="0.60"/><rect x="13.5" y="361.6" width="7.0" height="1.4" fill="#56b6c2" opacity="0.50"/><rect x="22.0" y="361.6" width="9.0" height="1.4" fill="#abb2bf" opacity="0.50"/><rect x="32.5" y="361.6" width="7.5" height="1.4" fill="#61afef" opacity="0.50"/><rect x="5.5" y="365.0" width="4.0" height="1.4" fill="#c678dd" opacity="0.60"/><rect x="11.5" y="365.0" width="5.0" height="1.4" fill="#d19a66" opacity="0.50"/><rect x="18.0" y="365.0" width="2.0" height="1.4" fill="#abb2bf" opacity="0.50"/><rect x="7.5" y="367.4" width="5.0" height="1.4" fill="#c678dd" opacity="0.60"/><rect x="13.5" y="367.4" width="6.0" height="1.4" fill="#61afef" opacity="0.50"/><rect x="21.0" y="367.4" width="11.0" height="1.4" fill="#abb2bf" opacity="0.50"/><rect x="33.5" y="367.4" width="11.0" height="1.4" fill="#abb2bf" opacity="0.50"/><rect x="46.0" y="367.4" width="4.0" height="1.4" fill="#61afef" opacity="0.50"/><rect x="5.5" y="369.4" width="2.0" height="1.4" fill="#c678dd" opacity="0.60"/><rect x="11.5" y="369.4" width="7.5" height="1.4" fill="#abb2bf" opacity="0.50"/><rect x="3.5" y="371.3" width="5.0" height="1.4" fill="#c678dd" opacity="0.60"/><rect x="9.5" y="371.3" width="9.5" height="1.4" fill="#abb2bf" opacity="0.50"/><rect x="3.0" y="375.2" width="54.0" height="1.4" fill="#5c6370" opacity="0.45"/><rect x="3.0" y="378.6" width="18.0" height="1.4" fill="#5c6370" opacity="0.45"/><rect x="3.0" y="381.0" width="62.0" height="1.4" fill="#5c6370" opacity="0.45"/><rect x="3.0" y="384.4" width="18.0" height="1.4" fill="#5c6370" opacity="0.45"/><rect x="3.0" y="386.9" width="22.0" height="1.4" fill="#5c6370" opacity="0.45"/><rect x="1.5" y="389.3" width="6.0" height="1.4" fill="#c678dd" opacity="0.60"/><rect x="8.5" y="389.3" width="4.0" height="1.4" fill="#c678dd" opacity="0.60"/><rect x="13.5" y="389.3" width="29.5" height="1.4" fill="#61afef" opacity="0.50"/><rect x="3.5" y="391.2" width="2.0" height="1.4" fill="#c678dd" opacity="0.60"/><rect x="9.5" y="391.2" width="10.0" height="1.4" fill="#abb2bf" opacity="0.50"/><rect x="21.0" y="391.2" width="5.0" height="1.4" fill="#abb2bf" opacity="0.50"/><rect x="27.5" y="391.2" width="11.0" height="1.4" fill="#61afef" opacity="0.50"/><rect x="40.0" y="391.2" width="5.0" height="1.4" fill="#abb2bf" opacity="0.50"/><rect x="3.5" y="393.2" width="5.0" height="1.4" fill="#c678dd" opacity="0.60"/><rect x="9.5" y="393.2" width="7.0" height="1.4" fill="#61afef" opacity="0.50"/><rect x="18.0" y="393.2" width="10.0" height="1.4" fill="#61afef" opacity="0.50"/><rect x="29.5" y="393.2" width="5.0" height="1.4" fill="#abb2bf" opacity="0.50"/><rect x="36.0" y="393.2" width="9.0" height="1.4" fill="#abb2bf" opacity="0.50"/><rect x="46.5" y="393.2" width="3.5" height="1.4" fill="#d19a66" opacity="0.50"/><rect x="5.5" y="395.1" width="4.0" height="1.4" fill="#c678dd" opacity="0.60"/><rect x="11.5" y="395.1" width="4.0" height="1.4" fill="#61afef" opacity="0.50"/><rect x="17.0" y="395.1" width="9.0" height="1.4" fill="#d19a66" opacity="0.50"/><rect x="27.5" y="395.1" width="3.0" height="1.4" fill="#abb2bf" opacity="0.50"/><rect x="32.0" y="395.1" width="5.0" height="1.4" fill="#56b6c2" opacity="0.50"/><rect x="38.5" y="395.1" width="3.0" height="1.4" fill="#abb2bf" opacity="0.50"/><rect x="43.0" y="395.1" width="2.0" height="1.4" fill="#61afef" opacity="0.50"/><rect x="15.0" y="107.0" width="22.0" height="1.8" fill="#d19a66" opacity="0.85"/><rect x="25.0" y="153.3" width="15.0" height="1.8" fill="#d19a66" opacity="0.85"/><rect x="30.0" y="183.5" width="17.0" height="1.8" fill="#d19a66" opacity="0.85"/><rect x="5.0" y="229.5" width="14.0" height="1.8" fill="#d19a66" opacity="0.85"/><rect x="5.0" y="231.5" width="14.0" height="1.8" fill="#d19a66" opacity="0.85"/><rect x="25.0" y="229.5" width="25.0" height="1.4" fill="#5c6370" opacity="0.50"/><rect x="25.0" y="231.5" width="22.0" height="1.4" fill="#5c6370" opacity="0.50"/><rect x="35.0" y="261.0" width="15.0" height="1.8" fill="#d19a66" opacity="0.85"/><rect x="43.0" y="269.4" width="14.0" height="1.8" fill="#d19a66" opacity="0.85"/><rect x="31.0" y="299.4" width="14.0" height="1.8" fill="#d19a66" opacity="0.85"/><rect x="20.0" y="311.0" width="13.0" height="1.8" fill="#d19a66" opacity="0.85"/><rect x="1.5" y="75.0" width="0.8" height="10.0" fill="#abb2bf" opacity="0.25"/><rect x="1.5" y="102.0" width="0.8" height="30.0" fill="#abb2bf" opacity="0.25"/><rect x="1.5" y="151.0" width="0.8" height="10.0" fill="#abb2bf" opacity="0.25"/><rect x="1.5" y="181.0" width="0.8" height="18.0" fill="#abb2bf" opacity="0.25"/><rect x="1.5" y="215.0" width="0.8" height="10.0" fill="#abb2bf" opacity="0.25"/><rect x="1.5" y="261.0" width="0.8" height="18.0" fill="#abb2bf" opacity="0.25"/><rect x="1.5" y="295.0" width="0.8" height="32.0" fill="#abb2bf" opacity="0.25"/><rect x="1.5" y="343.0" width="0.8" height="30.0" fill="#abb2bf" opacity="0.25"/><rect x="1.5" y="389.0" width="0.8" height="8.0" fill="#abb2bf" opacity="0.25"/></svg></div>
  <div id="vscroll"></div>
  <div id="hscroll"></div>
</div>
<div id="divider"></div>
<div id="right"><svg class="abs" style="left:28px;top:15px" width="18" height="19" viewBox="0 0 18 19">
<path d="M1.5 1.5 H11 L15.5 6 V17.5 H1.5 Z" fill="none" stroke="#dcdcf0" stroke-width="1.6"/>
<rect x="4" y="5" width="5" height="1.3" fill="#e8e8f0"/>
<rect x="4" y="8" width="9" height="1.3" fill="#c8f0e0"/>
<rect x="4" y="10.5" width="9" height="1.3" fill="#e0c8e8"/>
<rect x="4" y="13" width="9" height="1.3" fill="#f0f0c8"/>
</svg>
<svg class="abs" style="left:486px;top:14px" width="24" height="23" viewBox="0 0 24 23">
<path d="M9.5 5.5 V2 H17 L21 6 V14.5 H18.5" fill="none" stroke="#d0d0d8" stroke-width="1.7"/>
<path d="M6.5 9.5 H2 V20.5 H11.5 V18" fill="none" stroke="#d0d0d8" stroke-width="1.7"/>
<circle cx="11.5" cy="12" r="4.3" fill="none" stroke="#79b3e8" stroke-width="2"/>
<path d="M14.5 15 L19.5 20.5" stroke="#79b3e8" stroke-width="2.4"/>
</svg>
<svg class="abs" style="left:531px;top:16px" width="23" height="19" viewBox="0 0 23 19">
<rect x="1.4" y="1.4" width="19.8" height="16.2" fill="none" stroke="#c8c8d0" stroke-width="2.2"/>
<rect x="1.3" y="1.3" width="20" height="2.8" fill="#c8c8d0"/>
<rect x="10.3" y="1.3" width="2" height="16.4" fill="#c8c8d0"/>
</svg>
<svg class="abs" style="left:578px;top:21px" width="22" height="8" viewBox="0 0 22 8">
<circle cx="3" cy="3.8" r="2.3" fill="#d8d8d8"/><circle cx="10.5" cy="3.8" r="2.3" fill="#d8d8d8"/><circle cx="18" cy="3.8" r="2.3" fill="#d8d8d8"/>
</svg>
<svg class="abs" style="left:626px;top:19px" width="15" height="14" viewBox="0 0 15 14">
<path d="M1.5 1.2 L13.5 12.8 M13.5 1.2 L1.5 12.8" stroke="#ececec" stroke-width="3.1"/>
</svg>
<div class="abs" style="left:645px;top:50px;width:13px;height:387px;background:#4b4c53"></div>
<div class="abs rl" id="r0" style="left:29.7px;top:80.7px;font-size:42.0px;line-height:42.0px;font-weight:700;transform:scaleX(0.8787)">Native Class Timer</div>
<div class="abs rl" id="r1" style="left:29.3px;top:152.2px;font-size:20.3px;line-height:20.3px;font-weight:700;transform:scaleX(0.9125)">Category: Core</div>
<div class="abs rl" id="r2" style="left:29.0px;top:202.8px;font-size:20.3px;line-height:20.3px;font-weight:700;transform:scaleX(0.9284)">Inherits: <span style="color:#7e94f0">Node</span></div>
<div class="abs rl" id="r3" style="left:29.6px;top:252.5px;font-size:24.0px;line-height:24.0px;font-weight:700;transform:scaleX(0.8957)">Brief Description</div>
<div class="abs rl" id="r4" style="left:86.8px;top:303.8px;font-size:20.3px;line-height:20.3px;font-weight:400;transform:scaleX(0.9938)">A simple Timer node.</div>
<div class="abs rl" id="r5" style="left:29.6px;top:350.8px;font-size:24.0px;line-height:24.0px;font-weight:700;transform:scaleX(0.9013)">Description</div>
<div class="abs rl" id="r6" style="left:87.0px;top:401.8px;font-size:20.3px;line-height:20.3px;font-weight:400;transform:scaleX(1.0069)">Timer node. This is a simple node that will emit a timeout</div>
<div class="abs rl" id="r7" style="left:87.0px;top:426.8px;font-size:20.3px;line-height:20.3px;font-weight:400;transform:scaleX(1.0055)">callback when the timer runs out. It can optionally be set</div>
<div class="abs rl" id="r8" style="left:87.0px;top:451.8px;font-size:20.3px;line-height:20.3px;font-weight:400;transform:scaleX(1.0281)">to loop.</div>
<div class="abs rl" id="r9" style="left:29.2px;top:498.9px;font-size:24.0px;line-height:24.0px;font-weight:700;transform:scaleX(0.9298)">Method List</div>
<div class="abs rl" id="r10" style="left:87.0px;top:548.5px;font-size:20.3px;line-height:20.3px;font-weight:400;transform:scaleX(1.0057)"><span style="color:#7e94f0">float get_time_left</span> () <i>const</i></div>
<div class="abs rl" id="r11" style="left:87.0px;top:573.5px;font-size:20.3px;line-height:20.3px;font-weight:400;transform:scaleX(0.9837)"><span style="color:#7e94f0">int get_timer_process_mode</span> () <i>const</i></div>
<div class="abs rl" id="r12" style="left:87.0px;top:598.5px;font-size:20.3px;line-height:20.3px;font-weight:400;transform:scaleX(0.9985)"><span style="color:#7e94f0">float get_wait_time</span> () <i>const</i></div>
<div class="abs rl" id="r13" style="left:87.0px;top:623.5px;font-size:20.3px;line-height:20.3px;font-weight:400;transform:scaleX(0.9973)"><span style="color:#7e94f0">bool has_autostart</span> () <i>const</i></div>
<div class="abs rl" id="r14" style="left:87.0px;top:648.5px;font-size:20.3px;line-height:20.3px;font-weight:400;transform:scaleX(0.9854)"><span style="color:#7e94f0">bool is_active</span> () <i>const</i></div>
<div class="abs rl" id="r15" style="left:87.0px;top:673.5px;font-size:20.3px;line-height:20.3px;font-weight:400;transform:scaleX(0.9818)"><span style="color:#7e94f0">bool is_one_shot</span> () <i>const</i></div>
<div class="abs rl" id="r16" style="left:87.0px;top:698.5px;font-size:20.3px;line-height:20.3px;font-weight:400;transform:scaleX(0.9796)">void <span style="color:#7e94f0">set_active</span> (<span style="color:#7e94f0">bool</span> active)</div>
<div class="abs rl" id="r17" style="left:87.0px;top:723.5px;font-size:20.3px;line-height:20.3px;font-weight:400;transform:scaleX(0.9945)">void <span style="color:#7e94f0">set_autostart</span> (<span style="color:#7e94f0">bool</span> enable)</div>
<div class="abs rl" id="r18" style="left:87.0px;top:748.5px;font-size:20.3px;line-height:20.3px;font-weight:400;transform:scaleX(0.9813)">void <span style="color:#7e94f0">set_one_shot</span> (<span style="color:#7e94f0">bool</span> enable)</div>
<div class="abs rl" id="r19" style="left:87.0px;top:773.5px;font-size:20.3px;line-height:20.3px;font-weight:400;transform:scaleX(0.9812)">void <span style="color:#7e94f0">set_timer_process_mode</span> (<span style="color:#7e94f0">int</span> mode)</div>
<div class="abs rl" id="r20" style="left:87.0px;top:798.5px;font-size:20.3px;line-height:20.3px;font-weight:400;transform:scaleX(0.9768)">void <span style="color:#7e94f0">set_wait_time</span> (<span style="color:#7e94f0">float</span> time_sec)</div>
<div class="abs rl" id="r21" style="left:87.0px;top:823.5px;font-size:20.3px;line-height:20.3px;font-weight:400;transform:scaleX(0.9955)">void <span style="color:#7e94f0">start</span> ()</div>
<div class="abs rl" id="r22" style="left:87.0px;top:848.5px;font-size:20.3px;line-height:20.3px;font-weight:400;transform:scaleX(0.9906)">void <span style="color:#7e94f0">stop</span> ()</div>
<div class="abs rl" id="r23" style="left:29.2px;top:895.3px;font-size:24.0px;line-height:24.0px;font-weight:700;transform:scaleX(0.8681)">Signals</div>
<div class="abs rl" id="r24" style="left:87.5px;top:948.8px;font-size:20.3px;line-height:20.3px;font-weight:700;transform:scaleX(0.9341)">void timeout ()</div>
<div class="abs rl" id="r25" style="left:87.5px;top:999.8px;font-size:20.3px;line-height:20.3px;font-weight:400;transform:scaleX(1.0059)">Emitted when the time runs out.</div>
<div class="abs rl" id="r26" style="left:29.2px;top:1045.7px;font-size:24.0px;line-height:24.0px;font-weight:700;transform:scaleX(0.8837)">Constants</div>
<div class="abs bl" style="left:66.1px;top:311.7px"></div><div class="abs bl" style="left:66.2px;top:409.3px"></div><div class="abs bl" style="left:66.2px;top:556.1px"></div><div class="abs bl" style="left:66.2px;top:581.1px"></div><div class="abs bl" style="left:66.2px;top:606.1px"></div><div class="abs bl" style="left:66.2px;top:631.1px"></div><div class="abs bl" style="left:66.2px;top:656.1px"></div><div class="abs bl" style="left:66.2px;top:681.1px"></div><div class="abs bl" style="left:66.2px;top:706.1px"></div><div class="abs bl" style="left:66.2px;top:731.1px"></div><div class="abs bl" style="left:66.2px;top:756.1px"></div><div class="abs bl" style="left:66.2px;top:781.1px"></div><div class="abs bl" style="left:66.2px;top:806.1px"></div><div class="abs bl" style="left:66.2px;top:831.1px"></div><div class="abs bl" style="left:66.2px;top:856.1px"></div><div class="abs bl" style="left:66.2px;top:957.2px"></div></div>
</body></html>
